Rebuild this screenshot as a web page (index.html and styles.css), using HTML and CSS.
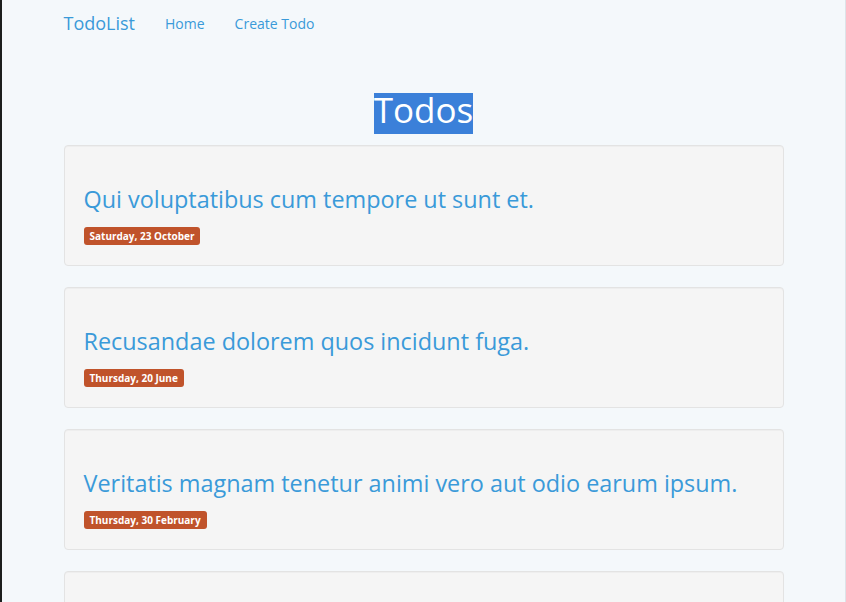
FILE: index.html
```html
<!DOCTYPE html>
<html>
<head>
<meta charset="utf-8">
<link rel="stylesheet" href="styles.css">
</head>
<body>
<div class="frame">
  <nav class="navbar">
    <div class="container nav-inner">
      <a class="brand">TodoList</a>
      <a class="nav-link">Home</a>
      <a class="nav-link">Create Todo</a>
    </div>
  </nav>
  <main class="container">
    <h1 class="page-title"><span class="sel">Todos</span></h1>
    <div class="list">
      <div class="well">
        <h3 class="todo-title">Qui voluptatibus cum tempore ut sunt et.</h3>
        <span class="badge">Saturday, 23 October</span>
      </div>
      <div class="well">
        <h3 class="todo-title">Recusandae dolorem quos incidunt fuga.</h3>
        <span class="badge">Thursday, 20 June</span>
      </div>
      <div class="well">
        <h3 class="todo-title">Veritatis magnam tenetur animi vero aut odio earum ipsum.</h3>
        <span class="badge">Thursday, 30 February</span>
      </div>
      <div class="well"></div>
    </div>
  </main>
</div>
</body>
</html>
```
FILE: styles.css
```css
html, body {
  margin: 0;
  padding: 0;
  height: 100%;
  overflow: hidden;
}
body {
  background: #f4f8fb;
  font-family: "Open Sans", "Lato", sans-serif;
  color: #333;
}
.frame {
  height: 100%;
  border-left: 2px solid #1c1e1d;
  border-right: 1px solid #dde3e8;
  box-sizing: border-box;
}
.container {
  width: 720px;
  margin: 0 auto;
}
.navbar {
  height: 50px;
}
.nav-inner {
  display: flex;
  align-items: center;
  height: 46px;
}
.brand {
  font-size: 18px;
  color: #3a9ad9;
  margin-right: 30px;
}
.nav-link {
  font-size: 14px;
  color: #3a9ad9;
  margin-right: 30px;
}
.page-title {
  margin: 43px 0 0;
  display: flex;
  justify-content: center;
  font-size: 35px;
  font-weight: 400;
}
.sel {
  display: block;
  background: #3b80d9;
  color: #fff;
  line-height: 33px;
  height: 33px;
  padding-bottom: 8px;
}
.list {
  display: flex;
  flex-direction: column;
  gap: 21px;
  margin-top: 11px;
}
.well {
  background: #f5f5f5;
  border: 1px solid #e3e3e3;
  border-radius: 4px;
  padding: 19px;
  box-shadow: inset 0 1px 1px rgba(0,0,0,0.03);
  display: flex;
  flex-direction: column;
  align-items: flex-start;
  height: 121px;
  box-sizing: border-box;
  flex-shrink: 0;
}
.todo-title {
  margin: 21px 0 14px;
  font-size: 23.4px;
  font-weight: 400;
  line-height: 27px;
  color: #3a9ad9;
}
.badge {
  background: #c0532b;
  color: #fff;
  font-size: 10px;
  font-weight: 700;
  padding: 0 6px;
  height: 18px;
  line-height: 18px;
  border-radius: 3px;
}
```
